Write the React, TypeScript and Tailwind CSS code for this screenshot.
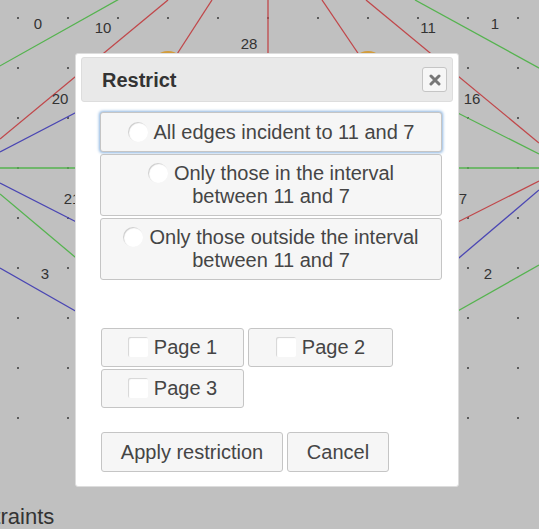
import React from 'react'

const DOT_XS = [18, 68, 118, 168, 218, 268, 318, 368, 418, 468, 518]
const DOT_YS = [18, 68, 118, 168, 218, 268, 318, 368, 418]

// edges of the graph (page coords), colour + endpoints
const EDGES: { c: string; x1: number; y1: number; x2: number; y2: number }[] = [
  { c: '#55b34f', x1: 130, y1: -7, x2: -2, y2: 67 },
  { c: '#c0474a', x1: 168, y1: 0, x2: 0, y2: 139 },
  { c: '#c0474a', x1: 212, y1: 0, x2: 168, y2: 68 },
  { c: '#c0474a', x1: 268, y1: 0, x2: 268, y2: 68 },
  { c: '#c0474a', x1: 322, y1: 0, x2: 368, y2: 68 },
  { c: '#c0474a', x1: 366, y1: 0, x2: 539, y2: 143 },
  { c: '#55b34f', x1: 415, y1: 0, x2: 541, y2: 69 },
  { c: '#4a46b3', x1: 0, y1: 152, x2: 100, y2: 100 },
  { c: '#55b34f', x1: 0, y1: 168, x2: 539, y2: 168 },
  { c: '#4a46b3', x1: 0, y1: 183, x2: 100, y2: 234 },
  { c: '#55b34f', x1: 0, y1: 194, x2: 100, y2: 278 },
  { c: '#4a46b3', x1: 0, y1: 268, x2: 100, y2: 325 },
  { c: '#55b34f', x1: 440, y1: 104, x2: 539, y2: 154 },
  { c: '#c0474a', x1: 440, y1: 231, x2: 539, y2: 181 },
  { c: '#4a46b3', x1: 440, y1: 274, x2: 539, y2: 190 },
  { c: '#55b34f', x1: 440, y1: 321, x2: 539, y2: 265 },
]

const LABELS: [string, number, number][] = [
  ['0', 38, 23],
  ['10', 103, 27],
  ['28', 249, 43],
  ['11', 428, 27],
  ['1', 495, 23],
  ['20', 60, 98],
  ['16', 472, 98],
  ['21', 72, 198],
  ['7', 463, 198],
  ['3', 45, 273],
  ['2', 488, 273],
]

const btn =
  'border border-[#c5c5c5] bg-[#f6f6f6] rounded-[3px] text-[#454545] text-[20px] leading-[23px]'

function Radio() {
  return (
    <span className="inline-block w-5 h-5 rounded-full bg-white shadow-[inset_1px_1px_1px_#cccccc] mr-[6px] align-[-3px]" />
  )
}

function Check() {
  return (
    <span className="inline-block w-5 h-5 rounded-[2px] bg-white shadow-[inset_1px_1px_1px_#d5d5d5] mr-[6px] align-[-3px]" />
  )
}

export default function App() {
  return (
    <div className="relative w-[539px] h-[529px] overflow-hidden bg-[#c0c0c0] font-['Liberation_Sans',Arial,sans-serif]">
      {/* graph canvas */}
      <svg width={539} height={506} className="block">
        {DOT_YS.map((y) =>
          DOT_XS.map((x) => <rect key={`${x}-${y}`} x={x - 1} y={y - 1} width={2} height={2} fill="#5a5a5a" />)
        )}
        {EDGES.map((e, i) => (
          <line key={i} x1={e.x1} y1={e.y1} x2={e.x2} y2={e.y2} stroke={e.c} strokeWidth={1.3} />
        ))}
        <circle cx={168} cy={68} r={17} fill="#d29c3c" />
        <circle cx={368} cy={68} r={17} fill="#d29c3c" />
        {LABELS.map(([t, x, y]) => (
          <text key={t} x={x} y={y + 5.5} textAnchor="middle" fontSize={15} fill="#333" fontFamily="Liberation Sans, Arial, sans-serif">
            {t}
          </text>
        ))}
      </svg>
      <div className="h-[23px] overflow-hidden">
        <h2 className="-ml-[57px] text-[22px] leading-[22px] text-[#333] whitespace-nowrap">Constraints</h2>
      </div>

      {/* dialog */}
      <div className="absolute left-[75px] top-[53px] w-[384px] h-[434px] bg-white border border-[#dddddd] rounded-[3px] px-[5px] pt-[3px]">
        <div className="h-[45px] flex items-center justify-between bg-[#e9e9e9] border border-[#dddddd] rounded-[3px] pl-5 pr-[5px]">
          <span className="text-[20px] font-bold text-[#333]">Restrict</span>
          <button className="w-[25px] h-[25px] flex items-center justify-center bg-[#f6f6f6] border border-[#c5c5c5] rounded-[3px]">
            <svg width="12" height="12" viewBox="0 0 12 12">
              <path d="M2 2L10 10M10 2L2 10" stroke="#777" strokeWidth="3" strokeLinecap="round" />
            </svg>
          </button>
        </div>

        <div className="ml-[19px] mt-[10px]">
          <div className="flex flex-col gap-[2px] w-[342px]">
            <label className={`${btn} h-[40px] flex items-center justify-center text-center border-[#7fa9d6] bg-[#efefef] shadow-[0_0_3px_1px_#8db5e0]`}>
              <span>
                <Radio />
                All edges incident to 11 and 7
              </span>
            </label>
            <label className={`${btn} h-[62px] flex items-center justify-center text-center`}>
              <span>
                <Radio />
                Only those in the interval
                <br />
                between 11 and 7
              </span>
            </label>
            <label className={`${btn} h-[62px] flex items-center justify-center text-center`}>
              <span>
                <Radio />
                Only those outside the interval
                <br />
                between 11 and 7
              </span>
            </label>
          </div>

          <div className="mt-[48px] ml-px flex flex-wrap w-[300px] gap-x-[4px] gap-y-[2px]">
            <label className={`${btn} w-[143px] h-[39px] flex items-center justify-center`}>
              <span>
                <Check />
                Page 1
              </span>
            </label>
            <label className={`${btn} w-[145px] h-[39px] flex items-center justify-center`}>
              <span>
                <Check />
                Page 2
              </span>
            </label>
            <label className={`${btn} w-[143px] h-[39px] flex items-center justify-center`}>
              <span>
                <Check />
                Page 3
              </span>
            </label>
          </div>

          <div className="mt-[24px] ml-px flex gap-[4px]">
            <button className={`${btn} w-[182px] h-10`}>Apply restriction</button>
            <button className={`${btn} w-[102px] h-10`}>Cancel</button>
          </div>
        </div>
      </div>
    </div>
  )
}
